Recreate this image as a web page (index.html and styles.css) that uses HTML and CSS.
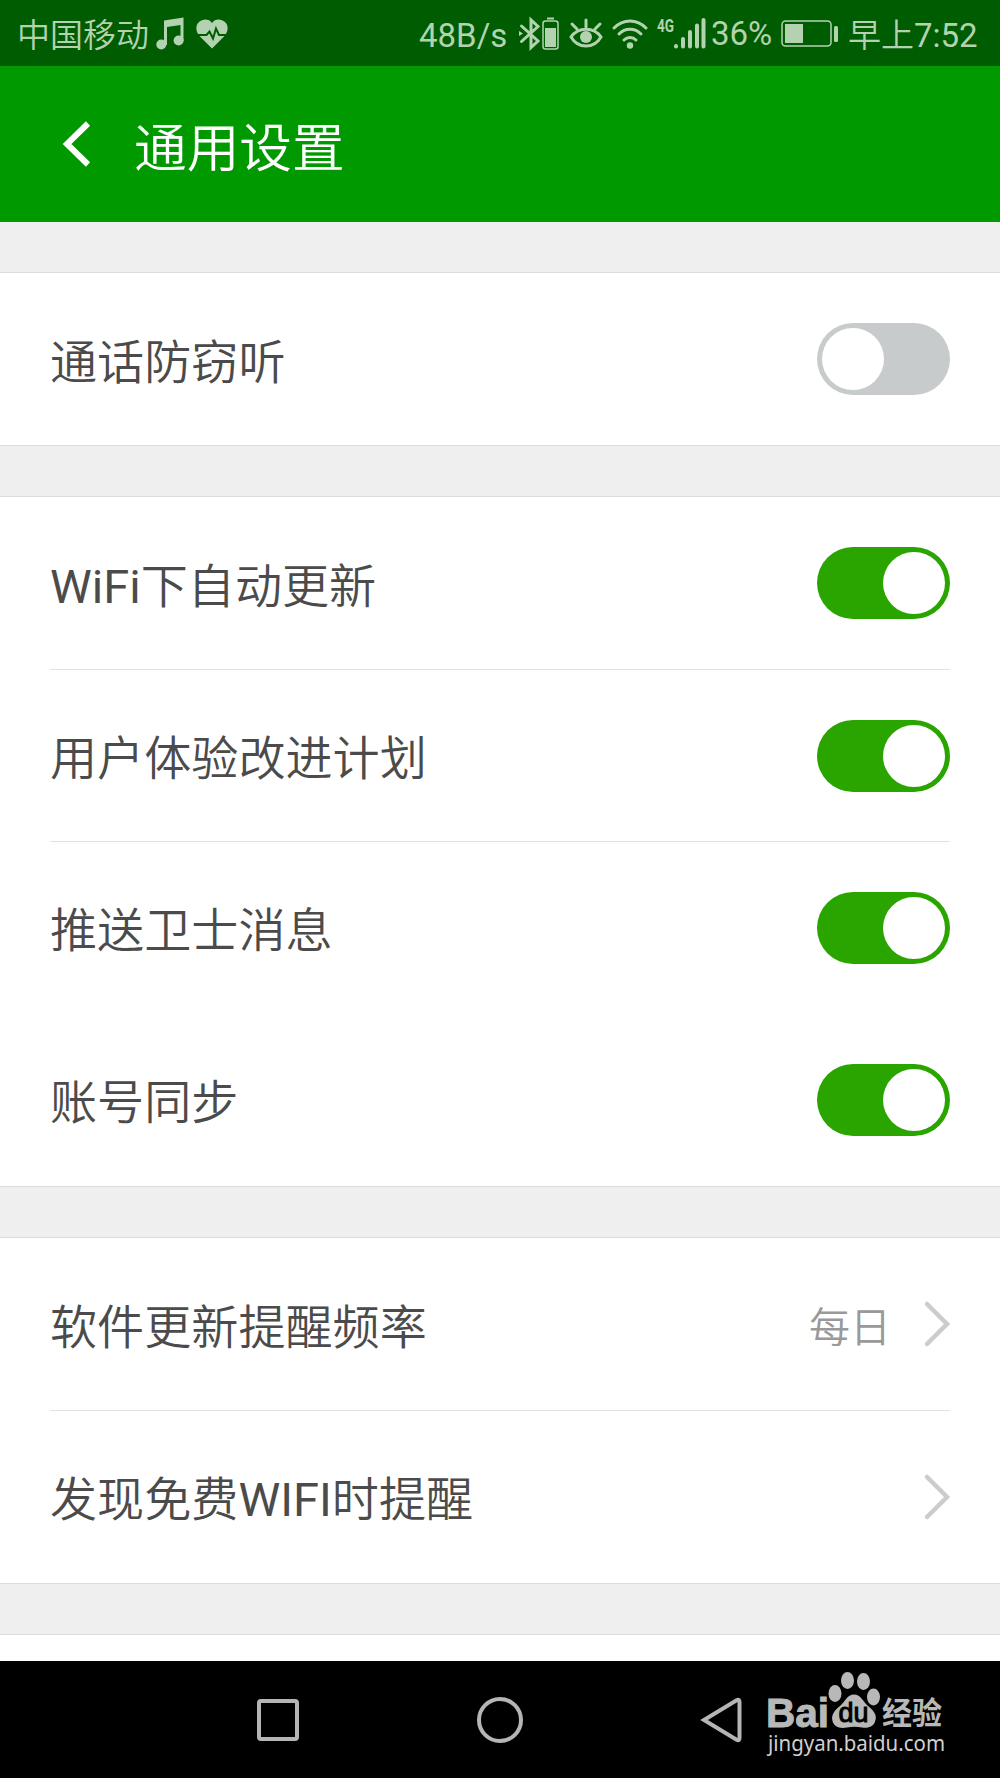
FILE: index.html
```html
<!DOCTYPE html>
<html lang="zh-CN">
  <head>
    <meta charset="UTF-8" />
    <title>通用设置</title>
    <meta name="viewport" content="width=device-width, initial-scale=1.0" />
    <link rel="stylesheet" href="styles.css">
  </head>
  <body>
    <div class="status-bar">
      <span class="carrier">中国移动</span>
      <svg class="icon-music" width="28" height="34" viewBox="0 0 28 34">
        <path d="M8 3.500L27.500 0.500V24h-3V8L11 10V28H8z" />
        <circle cx="5.300" cy="27.500" r="5" />
        <circle cx="22.600" cy="23.500" r="5" />
      </svg>
      <svg class="icon-heart" width="32" height="30" viewBox="0 0 32 30">
        <path d="M16 29.500L4.500 18C-1 12.500-.5 6 3 3C7 -.5 13-.5 16 4C19-.5 25-.5 29 3C32.500 6 33 12.500 27.500 18z" />
        <path class="pulse" d="M0 16H10.500L13.500 12.500L17 19.500L20 9.500L23 16H32" />
      </svg>

      <div class="status-right">
        <span class="speed">48B/s</span>
        <svg class="icon-bt" width="21" height="34" viewBox="0 0 21 34">
          <path class="line" d="M2.500 9L19 24L12 30.500V3L19 9.500L2.500 24.500" />
          <path d="M0 14l4 2.500L0 19z" />
        </svg>
        <svg class="icon-bt-battery" width="17" height="34" viewBox="0 0 17 34">
          <rect x="5" y="0.500" width="7" height="2" />
          <rect class="thin" x="1" y="4" width="15" height="28" rx="2.500" />
          <rect x="3" y="11" width="11" height="19" />
        </svg>
        <svg class="icon-eye" width="34" height="32" viewBox="0 0 34 32">
          <path class="line" d="M2 19C9 8.500 25 8.500 32 19C25 31 9 31 2 19z" />
          <circle cx="17" cy="19" r="6" />
          <path class="line" d="M17 9V2M8 11L3 6M26 11L31 6" />
        </svg>
        <svg class="icon-wifi" width="36" height="32" viewBox="0 0 36 32">
          <path class="line" d="M2 10C11 0.500 25 0.500 34 10M7 16C13 9.500 23 9.500 29 16M12 22C15.500 18.500 20.500 18.500 24 22" />
          <circle cx="18" cy="27.500" r="3.200" />
        </svg>
        <svg class="icon-signal" width="50" height="34" viewBox="0 0 50 34">
          <text class="net" x="0" y="15" textLength="17" lengthAdjust="spacingAndGlyphs">4G</text>
          <path class="bar" d="M19 29v.500M26 22v7.500M33 15v14.500M40 8.500v21M46.500 3v26.500" />
        </svg>
        <span class="percent">36%</span>
        <svg class="icon-battery" width="58" height="28" viewBox="0 0 58 28">
          <rect class="thin" x="1" y="1" width="49" height="25" rx="3.500" />
          <rect x="4" y="4" width="18" height="19" />
          <rect x="53" y="6" width="4" height="16" rx="1.500" />
        </svg>
        <span class="time">早上7:52</span>
      </div>
    </div>

    <div class="header">
      <svg width="28" height="46" viewBox="0 0 28 46">
        <path d="M25 2.500L4 23L25 43.500" />
      </svg>
      <h1>通用设置</h1>
    </div>

    <div class="content">
      <ul class="setting-list">
        <li class="setting-item">
          <span class="label">通话防窃听</span>
          <span class="switch"></span>
        </li>
      </ul>

      <ul class="setting-list group">
        <li class="setting-item">
          <span class="label">WiFi下自动更新</span>
          <span class="switch on"></span>
        </li>
        <li class="setting-item">
          <span class="label">用户体验改进计划</span>
          <span class="switch on"></span>
        </li>
        <li class="setting-item no-line">
          <span class="label">推送卫士消息</span>
          <span class="switch on"></span>
        </li>
        <li class="setting-item">
          <span class="label">账号同步</span>
          <span class="switch on"></span>
        </li>
      </ul>

      <ul class="setting-list group">
        <li class="setting-item">
          <span class="label">软件更新提醒频率</span>
          <span class="value">每日</span>
          <svg class="arrow" width="26" height="46" viewBox="0 0 26 46">
            <path d="M3 3L23 23L3 43" />
          </svg>
        </li>
        <li class="setting-item">
          <span class="label">发现免费WIFI时提醒</span>
          <svg class="arrow" width="26" height="46" viewBox="0 0 26 46">
            <path d="M3 3L23 23L3 43" />
          </svg>
        </li>
      </ul>

      <ul class="setting-list last"></ul>
    </div>

    <div class="nav-bar">
      <div class="nav-key">
        <svg width="46" height="46" viewBox="0 0 46 46">
          <rect x="4" y="4" width="38" height="38" rx="2" />
        </svg>
      </div>
      <div class="nav-key">
        <svg width="46" height="46" viewBox="0 0 46 46">
          <circle cx="23" cy="23" r="21" />
        </svg>
      </div>
      <div class="nav-key">
        <svg width="46" height="46" viewBox="0 0 46 46">
          <path d="M5 23L38 3Q40.500 2 40.500 5V41Q40.500 44 38 43z" />
        </svg>
      </div>

      <svg class="watermark" width="190" height="100" viewBox="0 0 190 100">
        <text class="wm-bai" x="6" y="61.500" textLength="63" lengthAdjust="spacingAndGlyphs">Bai</text>
        <ellipse cx="75" cy="28.500" rx="6.500" ry="8.500" />
        <ellipse cx="87.500" cy="15.500" rx="6.500" ry="8.500" />
        <ellipse cx="103.500" cy="16.500" rx="6.500" ry="8.500" />
        <ellipse cx="113.500" cy="32" rx="6.500" ry="8.500" />
        <path d="M94 29.500C101 29.500 103 37 108 41C114 46 117 50 115.500 55C114 62 108 63.500 102 62.500C97 61.500 92 61.500 87 62.500C80 64 74 62 72.500 56C71 50 74 46 80 41C85 37 87 29.500 94 29.500z" />
        <text class="wm-du" x="78.500" y="57" textLength="30" lengthAdjust="spacingAndGlyphs">du</text>
        <text class="wm-cn" x="122" y="59" textLength="60" lengthAdjust="spacingAndGlyphs">经验</text>
        <text class="wm-url" x="8" y="85.500" textLength="177" lengthAdjust="spacingAndGlyphs">jingyan.baidu.com</text>
      </svg>
    </div>
  </body>
</html>
```
FILE: styles.css
```css
* {
  box-sizing: border-box;
}

body {
  font-family: Roboto, 'Noto Sans CJK SC DemiLight', 'Noto Sans CJK SC', sans-serif;
  background-color: #efefef;
  margin: 0;
  height: 1778px;
  display: flex;
  flex-direction: column;
  overflow: hidden;
}

svg {
  display: block;
  flex-shrink: 0;
  overflow: visible;
}

/* status bar */
.status-bar {
  height: 66px;
  padding: 2px 23px 0 17px;
  background-color: #005c00;
  color: #b3d3b0;
  fill: #b3d3b0;
  font-size: 33px;
  line-height: 60px;
  display: flex;
  align-items: center;
  white-space: nowrap;
}

.status-bar span {
  padding-top: 3px;
}

.carrier {
  width: 139px;
}

.icon-heart {
  margin-left: 12px;
}

.pulse {
  fill: none;
  stroke: #005c00;
  stroke-width: 2;
}

.status-right {
  margin-left: auto;
  display: flex;
  align-items: center;
}

.speed {
  width: 100px;
}

.line,
.thin,
.bar {
  fill: none;
  stroke: #b3d3b0;
  stroke-width: 3;
  stroke-linecap: round;
}

.thin {
  stroke-width: 1.5;
}

.bar {
  stroke-width: 4;
}

.icon-bt-battery {
  margin-left: 2px;
}

.icon-eye {
  margin-left: 10px;
}

.icon-wifi {
  margin-left: 9px;
}

.icon-signal {
  margin-left: 9px;
}

.net {
  font-size: 18px;
  font-weight: 700;
}

.percent {
  width: 70px;
  margin-left: 4px;
}

.status-bar .percent {
  padding-top: 0;
}

.icon-battery {
  margin-right: 9px;
}

.time {
  width: 129px;
}

/* title */
.header {
  height: 156px;
  padding: 0 63px;
  background-color: #009900;
  display: flex;
  align-items: center;
}

.header path {
  fill: none;
  stroke: white;
  stroke-width: 6;
}

.header h1 {
  margin: 10px 0 0 43px;
  color: white;
  font-size: 52.7px;
  line-height: 70px;
  font-weight: 400;
}

/* settings */
.content {
  flex: 1;
  overflow: hidden;
}

.setting-list {
  list-style: none;
  margin: 50px 0 0;
  padding: 0 50px;
  background: white;
  border-top: 1px solid #dcdcdc;
  border-bottom: 1px solid #dcdcdc;
}

.setting-list.group {
  padding-bottom: 1px;
}

.setting-item {
  height: 172px;
  display: flex;
  align-items: center;
}

.setting-item + .setting-item {
  border-top: 1px solid #e2e2e2;
}

.setting-item.no-line + .setting-item {
  border-top-color: transparent;
}

.label {
  margin-right: auto;
  padding-top: 7px;
  color: #4b4b4b;
  font-size: 47.1px;
  line-height: 60px;
}

.value {
  padding-top: 7px;
  margin-right: 33px;
  color: #999;
  font-size: 41px;
  line-height: 60px;
}

.arrow path {
  fill: none;
  stroke: #ccc;
  stroke-width: 4.5;
  stroke-linecap: round;
}

.switch {
  width: 133.5px;
  height: 72px;
  padding: 5px;
  border-radius: 36px;
  background-color: #c8cbcc;
  display: flex;
}

.switch::before {
  content: '';
  width: 62px;
  height: 62px;
  border-radius: 50%;
  background: white;
}

.switch.on {
  background-color: #2aa500;
  justify-content: flex-end;
}

.setting-list.last {
  height: 60px;
}

/* navigation keys */
.nav-bar {
  position: relative;
  height: 117px;
  background: black;
  display: flex;
  justify-content: center;
  align-items: center;
}

.nav-key {
  width: 222px;
  display: flex;
  justify-content: center;
}

.nav-key svg {
  fill: none;
  stroke: #b5b5b5;
  stroke-width: 4;
}

.watermark {
  position: absolute;
  left: 760px;
  top: 4px;
  fill: #b8b8b8;
}

.wm-bai {
  font: 700 41px 'Liberation Sans', sans-serif;
  stroke: #b8b8b8;
  stroke-width: 1;
}

.wm-du {
  font: 400 27px 'Liberation Sans', sans-serif;
  fill: black;
  stroke: black;
  stroke-width: 1;
}

.wm-cn {
  font: 700 31px 'Noto Sans CJK SC', sans-serif;
}

.wm-url {
  font: 400 22px 'Noto Sans', sans-serif;
  fill: #d0d0d0;
}
```
